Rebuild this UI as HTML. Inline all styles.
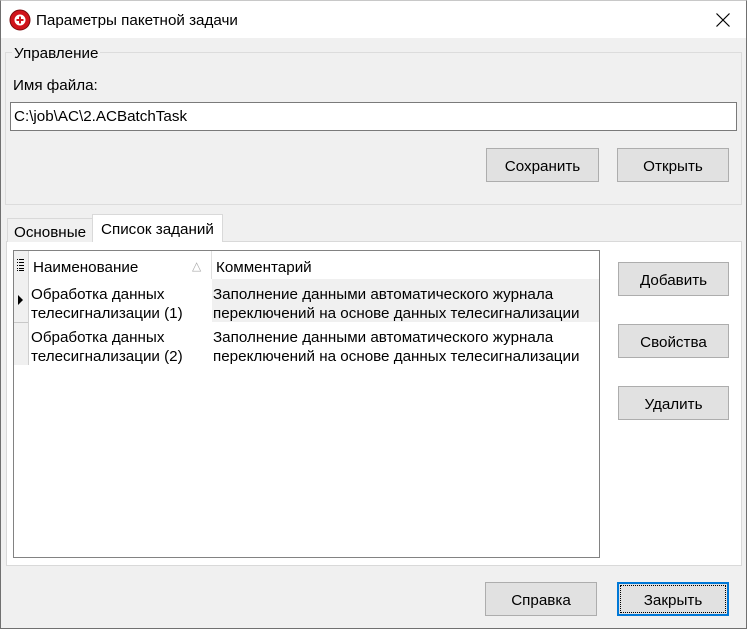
<!DOCTYPE html>
<html><head><meta charset="utf-8"><style>
*{box-sizing:border-box;margin:0;padding:0}
body{width:747px;height:629px;overflow:hidden;background:#f0f0f0;font-family:"Liberation Sans","DejaVu Sans",sans-serif;font-size:15.2px;color:#000;position:relative}
.a{position:absolute}
.win{left:0;top:0;width:747px;height:629px;border:1px solid #707070;border-top:1px solid #c8c8c8}
.title{left:1px;top:1px;width:745px;height:37px;background:#fff}
.btn{position:absolute;background:#e1e1e1;border:1px solid #adadad;display:flex;align-items:center;justify-content:center;padding-top:2px}
.t{position:absolute;white-space:nowrap;line-height:19px;margin-top:2px}
</style></head><body>
<div class="a win"></div>
<div class="a title"></div>
<svg class="a" style="left:9px;top:9px" width="22" height="22" viewBox="0 0 22 22"><circle cx="11" cy="11" r="10" fill="#d0141c" stroke="#7a0a0e" stroke-width="1"/><circle cx="11" cy="11" r="5.5" fill="#fff"/><rect x="10" y="7.5" width="2" height="7" fill="#d0141c"/><rect x="7.5" y="10" width="7" height="2" fill="#d0141c"/></svg>
<div class="t" style="left:36px;top:9px;font-size:15.2px">Параметры пакетной задачи</div>
<svg class="a" style="left:715px;top:12px" width="16" height="16" viewBox="0 0 16 16"><path d="M1.5 1.5L14.5 14.5M14.5 1.5L1.5 14.5" stroke="#000" stroke-width="1.2"/></svg>

<div class="a" style="left:5px;top:52px;width:737px;height:153px;border:1px solid #dcdcdc"></div>
<div class="t" style="left:12px;top:42px;background:#f0f0f0;padding:0 2px">Управление</div>
<div class="t" style="left:13px;top:74px">Имя файла:</div>
<div class="a" style="left:10px;top:102px;width:727px;height:29px;background:#fff;border:1px solid #7a7a7a"></div>
<div class="t" style="left:14px;top:105px">C:\job\AC\2.ACBatchTask</div>
<div class="btn" style="left:486px;top:148px;width:113px;height:34px">Сохранить</div>
<div class="btn" style="left:617px;top:148px;width:112px;height:34px">Открыть</div>

<div class="a" style="left:6px;top:241px;width:736px;height:325px;background:#fff;border:1px solid #d9d9d9"></div>
<div class="a" style="left:7px;top:218px;width:86px;height:24px;background:#f0f0f0;border:1px solid #d9d9d9;border-bottom:none"></div>
<div class="t" style="left:14px;top:221px">Основные</div>
<div class="a" style="left:92px;top:214px;width:131px;height:28px;background:#fff;border:1px solid #d9d9d9;border-bottom:none"></div>
<div class="t" style="left:101px;top:218px">Список заданий</div>

<div class="a" style="left:13px;top:250px;width:587px;height:308px;background:#fff;border:1px solid #828282"></div>
<div class="a" style="left:14px;top:251px;width:14px;height:114px;background:#f0f0f0"></div>
<div class="a" style="left:14px;top:322px;width:14px;height:1px;background:#c8c8c8"></div>
<div class="a" style="left:28px;top:251px;width:1px;height:114px;background:#d0d0d0"></div>
<svg class="a" style="left:16px;top:258px" width="10" height="14"><g fill="#000"><rect x="1" y="1" width="1" height="1"/><rect x="3" y="1" width="5" height="1"/><rect x="1" y="4" width="1" height="1"/><rect x="3" y="4" width="5" height="1"/><rect x="1" y="7" width="1" height="1"/><rect x="3" y="7" width="5" height="1"/><rect x="1" y="10" width="1" height="1"/><rect x="3" y="10" width="5" height="1"/><rect x="1" y="12" width="1" height="1"/><rect x="3" y="12" width="5" height="1"/></g></svg>
<svg class="a" style="left:17px;top:294px" width="8" height="12"><path d="M1 1L6 6L1 11Z" fill="#000"/></svg>
<div class="a" style="left:211px;top:251px;width:1px;height:28px;background:#e0e0e0"></div>
<div class="t" style="left:33px;top:256px">Наименование</div>
<div class="t" style="left:192px;top:255px;color:#aaa;font-size:12px">△</div>
<div class="t" style="left:216px;top:256px">Комментарий</div>
<div class="a" style="left:212px;top:279px;width:387px;height:43px;background:#f0f0f0"></div>
<div class="t" style="left:31px;top:283px">Обработка данных</div>
<div class="t" style="left:31px;top:302px">телесигнализации (1)</div>
<div class="t" style="left:213px;top:283px">Заполнение данными автоматического журнала</div>
<div class="t" style="left:213px;top:302px">переключений на основе данных телесигнализации</div>
<div class="t" style="left:31px;top:326px">Обработка данных</div>
<div class="t" style="left:31px;top:345px">телесигнализации (2)</div>
<div class="t" style="left:213px;top:326px">Заполнение данными автоматического журнала</div>
<div class="t" style="left:213px;top:345px">переключений на основе данных телесигнализации</div>

<div class="btn" style="left:618px;top:262px;width:111px;height:34px">Добавить</div>
<div class="btn" style="left:618px;top:324px;width:111px;height:34px">Свойства</div>
<div class="btn" style="left:618px;top:386px;width:111px;height:34px">Удалить</div>

<div class="btn" style="left:485px;top:582px;width:112px;height:34px">Справка</div>
<div class="btn" style="left:617px;top:582px;width:112px;height:34px;border:2px solid #0078d7;outline:1px dotted #000;outline-offset:-4px">Закрыть</div>
</body></html>
